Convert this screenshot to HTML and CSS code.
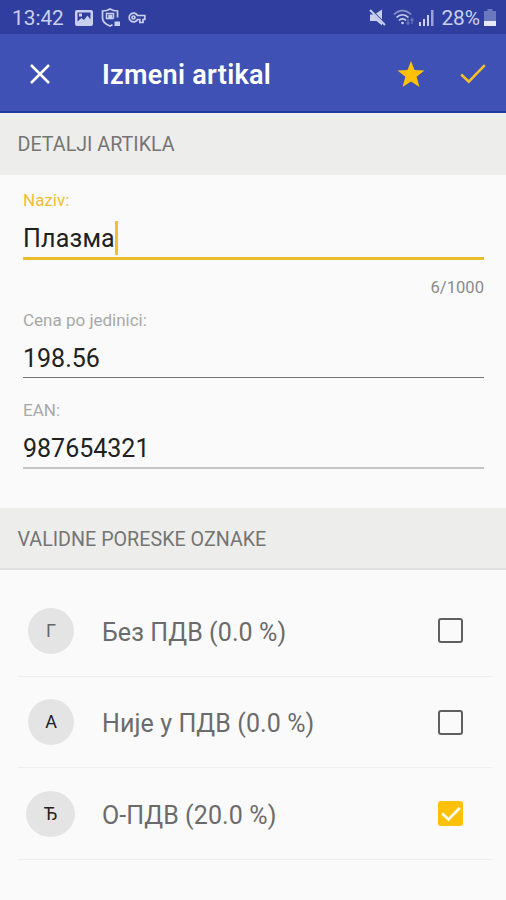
FILE: index.html
```html
<!DOCTYPE html>
<html lang="sr">
<head>
    <meta charset="UTF-8">
    <meta name="viewport" content="width=device-width, initial-scale=1.0">
    <title>Izmeni artikal</title>
    <link rel="stylesheet" href="styles.css">
</head>
<body>
    <div class="statusBar">
        <span class="clock">13:42</span>
        <svg class="icPhoto" width="18" height="16" viewBox="0 0 18 16">
            <path fill="currentColor" fill-rule="evenodd" d="M2 0h14a2 2 0 0 1 2 2v12a2 2 0 0 1-2 2H2a2 2 0 0 1-2-2V2a2 2 0 0 1 2-2zM2.500 2.500v9l4-3.500 2.500 2 3.500-4.500 3 4V2.500zM4 3.500h3v3H4z"/>
        </svg>
        <svg class="icShield" width="20" height="19" viewBox="0 0 20 19" fill="none" stroke="currentColor">
            <path stroke-width="1.700" d="M16.500 9.500V3C13.500 3 11 2.300 9 1 7 2.300 4.500 3 1.500 3v7c0 4 3.500 6.500 7.500 8l2.500-1.200"/>
            <path stroke-width="1.500" d="M12.500 10.500H5.500v-5h7v5M8 7.500h2.500v1.500H8z"/>
            <path fill="currentColor" stroke="none" d="M13.500 13.500h5.500v4.500h-5.500z"/>
        </svg>
        <svg class="icKey" width="18" height="12" viewBox="0 0 18 12" fill="none" stroke="currentColor" stroke-width="1.700">
            <path d="M9.500 3.500A4.400 4.400 0 1 0 9.500 7.500H11.800V10.500H15V7.500H16.800V3.500z"/>
            <circle cx="5.500" cy="5.500" r="1.500"/>
        </svg>
        <span class="spacer"></span>
        <svg class="icMute" width="17" height="17" viewBox="0 0 17 17">
            <path fill="currentColor" d="M1 5.500h3.500l8.500 8.500v2.500L7.500 12H1zM7 4.500l6-4v10z"/>
            <path stroke="currentColor" stroke-width="2" d="M1 1l15 15"/>
        </svg>
        <svg class="icWifi" width="21" height="17" viewBox="0 0 21 17" fill="none" stroke="currentColor" stroke-width="1.700">
            <path d="M1 5.500C6 .2 13 .2 18 5.500" opacity=".6"/>
            <path d="M3.500 8.500c3.500-3.700 8.500-3.700 12 0M6 11.500c2-2.200 5-2.200 7 0"/>
            <circle cx="9.500" cy="14" r="1.300" fill="currentColor" stroke="none"/>
            <path stroke-width="1.300" opacity=".35" d="M15 10v5M13.500 13.500l1.500 2 1.500-2M19 15v-5M17.500 11.500l1.500-2 1.500 2"/>
        </svg>
        <svg class="icSignal" width="17" height="17" viewBox="0 0 17 17" fill="currentColor">
            <path d="M1 13h2v4H1zM5 10h2v7H5zM9 6h2v11H9z"/>
            <path opacity=".7" d="M13 1h2.500v16H13z"/>
        </svg>
        <span class="battery">28%</span>
        <svg class="icBattery" width="12" height="17" viewBox="0 0 12 17" fill="currentColor">
            <path opacity=".4" d="M3.500 0h5v2H12v10H0V2h3.500z"/>
            <path fill="#e6e9fa" d="M0 12h12v5H0z"/>
        </svg>
    </div>

    <div class="toolbar">
        <svg class="icClose" width="20" height="20" viewBox="0 0 20 20" stroke="currentColor" stroke-width="2.500">
            <path d="M1 1l18 18M19 1L1 19"/>
        </svg>
        <h1 class="title">Izmeni artikal</h1>
        <span class="spacer"></span>
        <svg class="icStar" width="28" height="26" viewBox="0 0 28 26">
            <path fill="currentColor" d="M14 0l3.500 9 10 .5-7.900 6.200 2.900 10.300-8.500-5.600L5.500 26l2.900-10.300L.5 9.500l10-.5z"/>
        </svg>
        <svg class="icDone" width="26" height="20" viewBox="0 0 26 20" fill="none" stroke="currentColor" stroke-width="2.500">
            <path d="M1.200 10.500l7.600 7.200L24.800 1.200"/>
        </svg>
    </div>

    <h2 class="section">DETALJI ARTIKLA</h2>
    <div class="form">
        <div class="field active">
            <label class="label">Naziv:</label>
            <div class="value"><span class="text">Плазма</span><span class="caret"></span></div>
            <div class="counter">6/1000</div>
        </div>
        <div class="field price">
            <label class="label">Cena po jedinici:</label>
            <div class="value">198.56</div>
        </div>
        <div class="field ean">
            <label class="label">EAN:</label>
            <div class="value">987654321</div>
        </div>
    </div>

    <h2 class="section sectionLine">VALIDNE PORESKE OZNAKE</h2>
    <div class="list">
        <div class="row">
            <span class="mark markGray">Г</span>
            <span class="name">Без ПДВ (0.0 %)</span>
            <span class="check"></span>
        </div>
        <div class="row">
            <span class="mark">А</span>
            <span class="name">Није у ПДВ (0.0 %)</span>
            <span class="check"></span>
        </div>
        <div class="row">
            <span class="mark markWide">Ђ</span>
            <span class="name">О-ПДВ (20.0 %)</span>
            <span class="check checked">
                <svg width="20" height="16" viewBox="0 0 20 16" fill="none" stroke="currentColor" stroke-width="2.600">
                    <path d="M1.200 7.500l6.300 6L18.800 2"/>
                </svg>
            </span>
        </div>
    </div>
</body>
</html>
```
FILE: styles.css
```css
* {
    box-sizing: border-box;
}
body {
    margin: 0;
    height: 900px;
    overflow: hidden;
    background-color: #fafafa;
    font-family: Roboto, "Noto Sans", sans-serif;
    color: #212121;
}
svg {
    display: block;
    flex: none;
}
.spacer {
    flex: 1;
}
.statusBar {
    display: flex;
    align-items: center;
    height: 34px;
    padding: 1px 10px 0 12px;
    background-color: #303f9f;
    color: #c9cfee;
    font-size: 20.8px;
}
.icPhoto {
    margin-left: 11px;
}
.icShield {
    margin-left: 8px;
}
.icKey {
    margin-left: 7px;
}
.icWifi {
    margin-left: 7px;
}
.icSignal {
    margin-left: 4px;
}
.battery {
    margin-left: 6px;
}
.icBattery {
    margin-left: 4px;
}
.toolbar {
    display: flex;
    align-items: center;
    height: 79px;
    padding: 2px 20px 0 30px;
    background-color: #3f51b5;
    border-bottom: 2px solid #1c399c;
    color: #fff;
}
.title {
    margin: 0 0 0 52px;
    padding-top: 2px;
    font-size: 27px;
    font-weight: 600;
    letter-spacing: 0.3px;
    line-height: 40px;
}
.icStar {
    color: #ffc107;
}
.icDone {
    margin-left: 35px;
    color: #f7c02b;
}
.section {
    margin: 0;
    height: 62px;
    padding-left: 17.5px;
    background-color: #ededeb;
    color: #757575;
    font-size: 19.7px;
    font-weight: 400;
    line-height: 63px;
}
.sectionLine {
    border-bottom: 2px solid #e0e0de;
}
.form {
    height: 333px;
    padding: 15px 22px 0 23px;
}
.label {
    display: block;
    color: #a8a8a8;
    font-size: 17px;
    line-height: 20px;
}
.value {
    display: flex;
    align-items: center;
    height: 50px;
    padding-top: 11px;
    border-bottom: 3px solid #e9bd2c;
    font-size: 25px;
    line-height: 36px;
}
.active .label {
    color: #eebf35;
}
.text {
    letter-spacing: 0.2px;
}
.caret {
    width: 3px;
    height: 34px;
    margin-top: -2px;
    background-color: #f0c030;
}
.counter {
    height: 50px;
    padding-top: 18px;
    color: #8a8a8a;
    font-size: 16.6px;
    line-height: 20px;
    text-align: right;
}
.price .value {
    height: 48px;
    border-bottom: 1px solid #757575;
}
.price {
    height: 90px;
}
.ean .value {
    height: 49px;
    border-bottom: 2px solid #c6c6c6;
}
.list {
    padding: 15px 14px 0 18px;
}
.row {
    display: flex;
    align-items: center;
    height: 91.5px;
    padding: 1px 29px 0 10px;
    border-bottom: 1px solid #eee;
}
.mark {
    width: 46px;
    height: 46px;
    flex: none;
    border-radius: 50%;
    background-color: #e4e4e4;
    font-size: 18px;
    line-height: 46px;
    text-align: center;
}
.markGray {
    color: #666;
}
.markWide {
    width: 49px;
    margin: 0 -1px 0 -2px;
}
.name {
    flex: 1;
    margin-left: 28px;
    padding-top: 3px;
    color: #6b6b6b;
    font-size: 25px;
    letter-spacing: 0.1px;
}
.check {
    width: 25px;
    height: 25px;
    border: 2px solid #5f5f5f;
    border-radius: 3px;
}
.checked {
    display: flex;
    align-items: center;
    justify-content: center;
    border-color: #ffc107;
    background-color: #ffc107;
    color: #fff;
}
```
